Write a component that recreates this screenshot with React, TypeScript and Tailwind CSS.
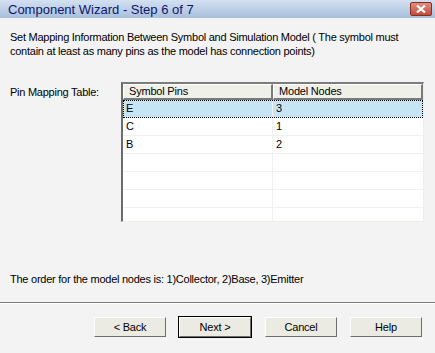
import React from 'react';

const rows = [
  { pin: 'E', node: '3' },
  { pin: 'C', node: '1' },
  { pin: 'B', node: '2' },
  { pin: '', node: '' },
  { pin: '', node: '' },
  { pin: '', node: '' },
  { pin: '', node: '' },
];

function WinButton({ label, isDefault }: { label: string; isDefault?: boolean }) {
  return (
    <div
      className={
        'w-[74px] h-[22px] ' +
        (isDefault ? 'border border-black' : 'border border-transparent')
      }
    >
      <div className="w-full h-full bg-[#ecebe3] border-t border-l border-white border-r border-b border-r-[#6e6e6e] border-b-[#6e6e6e] flex items-center justify-center text-[11px] tracking-[-0.2px] text-black">
        {label}
      </div>
    </div>
  );
}

export default function App() {
  return (
    <div
      className="w-[435px] h-[353px] bg-[#f3f3f3] flex flex-col overflow-hidden"
      style={{ fontFamily: '"Liberation Sans", Arial, sans-serif' }}
    >
      {/* title bar */}
      <div className="h-[18px] bg-gradient-to-b from-[#d3e0f1] to-[#a9bfdd] flex items-center justify-between pl-[8px] pr-[3px]">
        <span className="text-[13px] text-[#0c176a] leading-none">Component Wizard - Step 6 of 7</span>
        <div className="w-[22px] h-[14px] rounded-[2px] bg-gradient-to-b from-[#e38d7e] to-[#c14a3a] border border-[#8a2c22] flex items-center justify-center">
          <svg width="10" height="8" viewBox="0 0 10 8">
            <path d="M1 0.5 L9 7.5 M9 0.5 L1 7.5" stroke="#fff" strokeWidth="2.2" />
          </svg>
        </div>
      </div>

      {/* intro */}
      <div className="pl-[10px] pt-[12px] text-[11px] leading-[14px] tracking-[-0.25px] text-black">
        Set Mapping Information Between Symbol and Simulation Model ( The symbol must
        <br />
        contain at least as many pins as the model has connection points)
      </div>

      {/* table */}
      <div className="flex mt-[24px]">
        <div className="w-[121px] pl-[10px] pt-[3px] text-[11px] leading-[14px] tracking-[-0.25px] text-black">Pin Mapping Table:</div>
        <div className="w-[303px] h-[140px] bg-white border-t-2 border-l-2 border-t-[#7c7c7c] border-l-[#6c6c6c] border-r border-b border-r-[#efeee2] border-b-[#efeee2] overflow-hidden">
          <div className="flex h-[16px] text-[11px] tracking-[-0.2px] text-black">
            <div className="w-[150px] bg-[#f0f0ea] border-t border-l border-white border-r-2 border-b-2 border-r-[#7a7a7a] border-b-[#7a7a7a] pl-[5px] leading-[13px]">
              Symbol Pins
            </div>
            <div className="w-[150px] bg-[#f0f0ea] border-t border-l border-white border-r-2 border-b-2 border-r-[#7a7a7a] border-b-[#7a7a7a] pl-[5px] leading-[13px]">
              Model Nodes
            </div>
          </div>
          {rows.map((r, i) => (
            <div
              key={i}
              className={
                'flex h-[18px] text-[11px] text-black leading-[17px] ' +
                (i === 0 ? 'bg-[#c6e4f4] outline-1 outline-dotted outline-black -outline-offset-1' : '')
              }
            >
              <div className="w-[150px] border-b border-r border-[#f0f0f0] pl-[3px]">{r.pin}</div>
              <div className="w-[150px] border-b border-[#f0f0f0] pl-[3px]">{r.node}</div>
            </div>
          ))}
        </div>
      </div>

      {/* note */}
      <div className="pl-[10px] mt-[50px] text-[11px] leading-[14px] tracking-[-0.25px] text-black">
        The order for the model nodes is: 1)Collector, 2)Base, 3)Emitter
      </div>

      <div className="mt-[16px] h-[2px] bg-[#7a7a7a] border-b border-white" />

      {/* buttons */}
      <div className="flex pl-[93px] mt-[12px]">
        <WinButton label="< Back" />
        <div className="w-[11px]" />
        <WinButton label="Next >" isDefault />
        <div className="w-[12px]" />
        <WinButton label="Cancel" />
        <div className="w-[11px]" />
        <WinButton label="Help" />
      </div>
    </div>
  );
}
